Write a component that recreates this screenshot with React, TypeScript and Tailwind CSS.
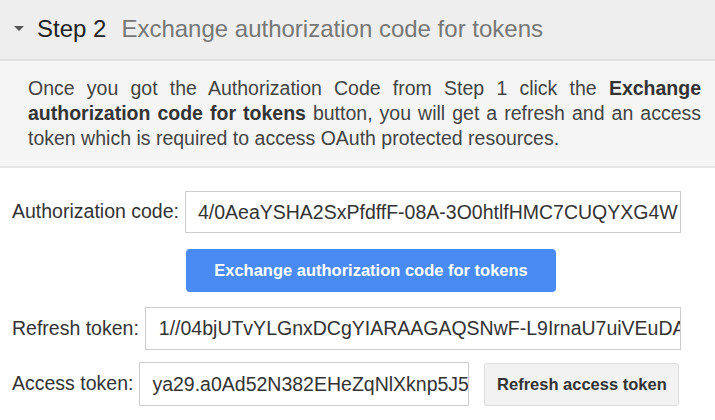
import React from "react";

export default function App() {
  return (
    <div className="w-[715px] h-[420px] bg-white overflow-hidden font-['Liberation_Sans',Arial,sans-serif]">
      <div className="h-[61px] bg-[#eeeeee] border-b-2 border-[#e2e2e2] flex items-center pl-[14px] pb-[2px]">
        <svg width="10" height="6" viewBox="0 0 10 6" className="mr-[13px] mt-[1px]">
          <polygon points="0,0 10,0 5,5" fill="#555555" />
        </svg>
        <span className="text-[24px] text-[#222222] leading-none">Step 2</span>
        <span className="text-[24px] text-[#777777] leading-none ml-[15px]">
          Exchange authorization code for tokens
        </span>
      </div>
      <div className="bg-[#f5f5f5] border-b-2 border-[#e6e6e6] pl-[28px] pr-[14px] pt-[15px] pb-[15px] text-[19.5px] leading-[25px] text-[#444444] text-justify">
        Once you got the Authorization Code from Step 1 click the{" "}
        <b className="text-[#333333]">Exchange authorization code for tokens</b> button, you will get a refresh and an
        access token which is required to access OAuth protected resources.
      </div>
      <div className="pl-[12px] pr-[34px] pt-[23px] flex flex-col">
        <div className="flex items-center">
          <span className="text-[19.5px] text-[#333333] mr-[6px] whitespace-nowrap">Authorization code:</span>
          <input
            readOnly
            value="4/0AeaYSHA2SxPfdffF-08A-3O0htlfHMC7CUQYXG4W"
            className="flex-1 min-w-0 h-[42px] border border-[#cccccc] pl-[12px] text-[19.5px] text-[#333333] outline-none bg-white"
          />
        </div>
        <div className="mt-[16px] pl-[174px]">
          <button className="w-[370px] h-[43px] rounded-[4px] bg-[#4a8bf3] text-white font-bold text-[16.5px]">
            Exchange authorization code for tokens
          </button>
        </div>
        <div className="flex items-center mt-[15px]">
          <span className="text-[19.5px] text-[#333333] mr-[6px] whitespace-nowrap">Refresh token:</span>
          <input
            readOnly
            value="1//04bjUTvYLGnxDCgYIARAAGAQSNwF-L9IrnaU7uiVEuDA"
            className="flex-1 min-w-0 h-[43px] border border-[#cccccc] pl-[13px] text-[19.5px] text-[#333333] outline-none bg-white"
          />
        </div>
        <div className="flex items-center mt-[12px]">
          <span className="text-[19.5px] text-[#333333] mr-[6px] whitespace-nowrap">Access token:</span>
          <input
            readOnly
            value="ya29.a0Ad52N382EHeZqNlXknp5J5"
            className="w-[330px] h-[44px] border border-[#cccccc] pl-[12px] text-[19.5px] text-[#333333] outline-none bg-white"
          />
          <button className="ml-[15px] w-[195px] h-[43px] rounded-[3px] bg-[#f2f2f2] border border-[#dddddd] text-[#333333] font-bold text-[16.5px]">
            Refresh access token
          </button>
        </div>
      </div>
    </div>
  );
}
